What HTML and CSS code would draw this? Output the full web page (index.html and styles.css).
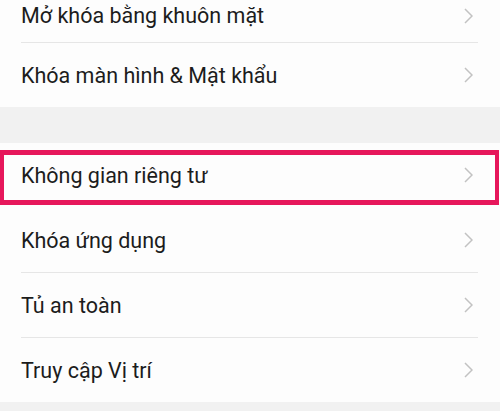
FILE: index.html
```html
<!DOCTYPE html>
<html lang="vi">
<head>
<meta charset="utf-8">
<link rel="stylesheet" href="styles.css">
</head>
<body>
<div class="screen">
  <section class="group group-top">
    <div class="row row-first"><span class="label">Mở khóa bằng khuôn mặt</span><svg class="chev" viewBox="0 0 9 16"><path d="M1 1 L8 8 L1 15"/></svg></div>
    <div class="row"><span class="label">Khóa màn hình &amp; Mật khẩu</span><svg class="chev" viewBox="0 0 9 16"><path d="M1 1 L8 8 L1 15"/></svg></div>
  </section>
  <section class="group group-bottom">
    <div class="row row-marked"><span class="label">Không gian riêng tư</span><svg class="chev" viewBox="0 0 9 16"><path d="M1 1 L8 8 L1 15"/></svg><div class="highlight"></div></div>
    <div class="row"><span class="label">Khóa ứng dụng</span><svg class="chev" viewBox="0 0 9 16"><path d="M1 1 L8 8 L1 15"/></svg></div>
    <div class="row"><span class="label">Tủ an toàn</span><svg class="chev" viewBox="0 0 9 16"><path d="M1 1 L8 8 L1 15"/></svg></div>
    <div class="row"><span class="label">Truy cập Vị trí</span><svg class="chev" viewBox="0 0 9 16"><path d="M1 1 L8 8 L1 15"/></svg></div>
  </section>
</div>
</body>
</html>
```

FILE: styles.css
```css
html, body {
  margin: 0;
  padding: 0;
}
body {
  background: #f1f1f1;
  font-family: Roboto, "Noto Sans", "Liberation Sans", sans-serif;
  overflow: hidden;
}
.screen {
  width: 500px;
  height: 411px;
  overflow: hidden;
  display: flex;
  flex-direction: column;
}
.group {
  background: #fdfdfd;
  display: flex;
  flex-direction: column;
}
.group-top {
  margin-top: -22px;
}
.group-bottom {
  margin-top: 36px;
}
.row {
  position: relative;
  display: flex;
  align-items: center;
  justify-content: space-between;
  height: 64px;
  margin: 0 22px 0 21px;
}
.row:not(:last-child) {
  border-bottom: 1px solid #e6e6e6;
}
.row-first {
  height: 53px;
  padding-top: 11px;
}
.row-marked {
  border-bottom-color: transparent !important;
}
.label {
  font-size: 21.5px;
  color: #1c1c1c;
  letter-spacing: 0;
}
.chev {
  width: 9px;
  height: 16px;
  margin-right: 5px;
  fill: none;
  stroke: #c2c2c2;
  stroke-width: 1.5;
}
.highlight {
  position: absolute;
  left: -21px;
  right: -21px;
  top: 7px;
  height: 45px;
  border: 5px solid #e6175b;
  border-left-width: 4px;
  border-right-width: 4px;
  pointer-events: none;
}
```
